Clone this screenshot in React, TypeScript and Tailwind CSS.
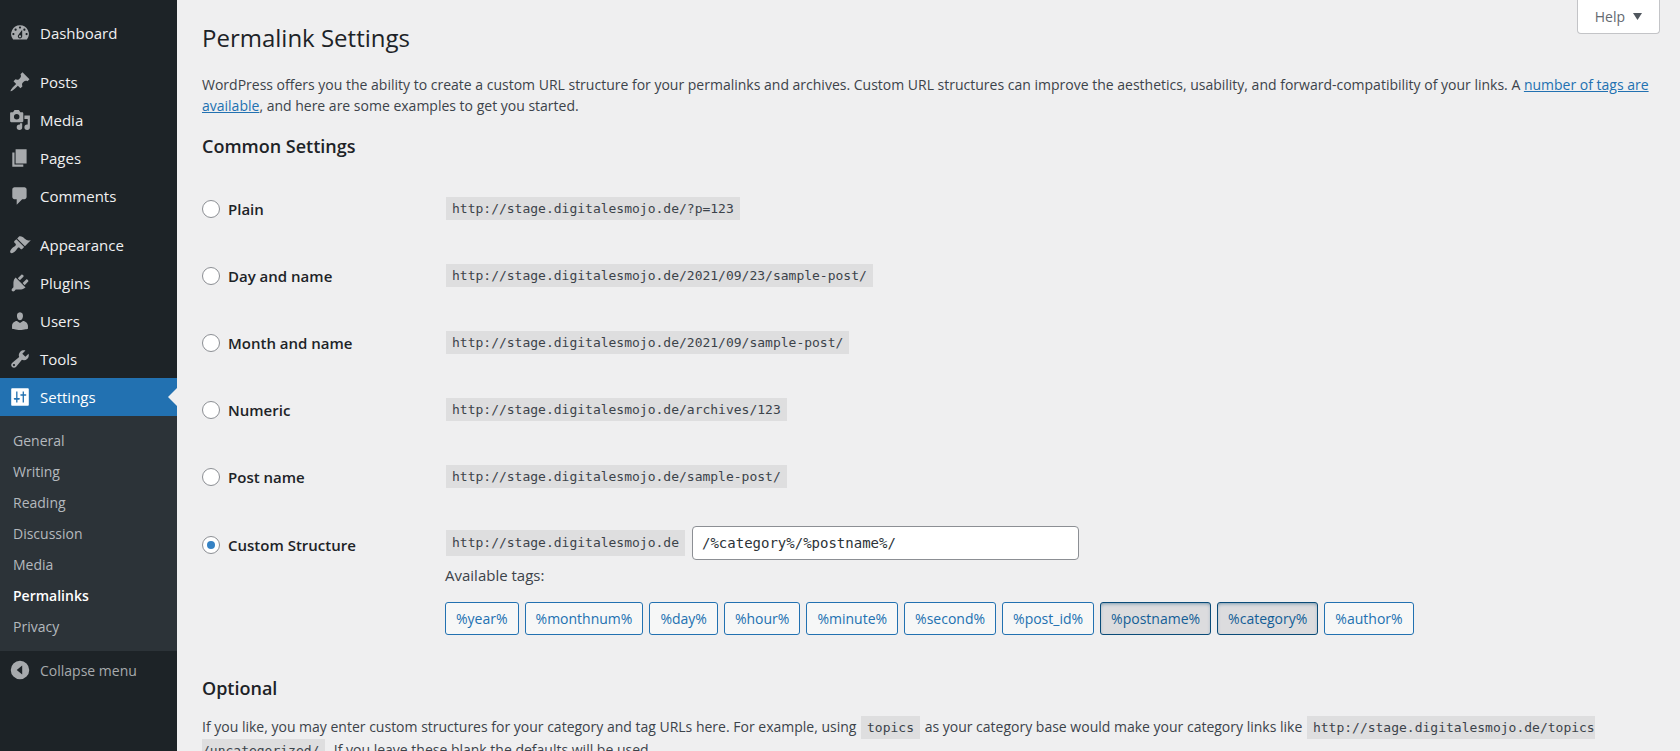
import { useState } from "react";
import type { ReactNode } from "react";

const ICONS = {
  dashboard:
    "M3.76 16h12.48A7.998 7.998 0 0 0 10 3a7.998 7.998 0 0 0-6.24 13zM10 4c.55 0 1 .45 1 1s-.45 1-1 1-1-.45-1-1 .45-1 1-1zM6 6c.55 0 1 .45 1 1s-.45 1-1 1-1-.45-1-1 .45-1 1-1zm8 0c.55 0 1 .45 1 1s-.45 1-1 1-1-.45-1-1 .45-1 1-1zm-5.37 5.55L12 7v6c0 1.1-.9 2-2 2s-2-.9-2-2c0-.57.24-1.08.63-1.45zM4 10c.55 0 1 .45 1 1s-.45 1-1 1-1-.45-1-1 .45-1 1-1zm12 0c.55 0 1 .45 1 1s-.45 1-1 1-1-.45-1-1 .45-1 1-1zm-5 3c0-.55-.45-1-1-1s-1 .45-1 1 .45 1 1 1 1-.45 1-1z",
  posts:
    "M10.44 3.02l1.82-1.82 6.36 6.35-1.83 1.82c-1.05-.68-2.48-.57-3.41.36l-.75.75c-.92.93-1.04 2.35-.35 3.41l-1.83 1.82-2.41-2.41-2.8 2.79c-.42.42-3.38 2.71-3.8 2.29s1.86-3.39 2.28-3.81l2.79-2.79L4.1 9.36l1.83-1.82c1.05.69 2.48.57 3.4-.36l.75-.75c.93-.92 1.05-2.35.36-3.41z",
  media:
    "M13 11V4c0-.55-.45-1-1-1h-1.67L9 1H5L3.67 3H2c-.55 0-1 .45-1 1v7c0 .55.45 1 1 1h10c.55 0 1-.45 1-1zM7 4.5a2.5 2.5 0 0 1 0 5 2.5 2.5 0 0 1 0-5zM14 6h5v10.5a2.5 2.5 0 1 1-5 0 2.5 2.5 0 0 1 2.5-2.5c.17 0 .34.02.5.05V9h-3V6zm-4 8.05V13h2v3.5a2.5 2.5 0 1 1-2.5-2.5c.17 0 .34.02.5.05z",
  pages: "M6 15V2h10v13H6zm-1 1h8v2H3V5h2v11z",
  comments:
    "M5 2h9c1.1 0 2 .9 2 2v7c0 1.1-.9 2-2 2h-2l-5 5v-5H5c-1.1 0-2-.9-2-2V4c0-1.1.9-2 2-2z",
  appearance:
    "M14.48 11.06L7.41 3.99l1.5-1.5c.5-.56 2.3-.47 3.51.32 1.21.8 1.43 1.28 2.91 2.1 1.18.64 2.45 1.26 4.45.85zm-.71.71L6.7 4.7 4.93 6.47c-.39.39-.39 1.02 0 1.41l1.06 1.06c.39.39.39 1.03 0 1.42-.6.6-1.43 1.11-2.21 1.69-.35.26-.7.53-1.01.84C1.43 14.23.4 16.08 1.4 17.07c.99 1 2.84-.03 4.18-1.36.31-.31.58-.66.85-1.02.57-.78 1.08-1.61 1.69-2.21.39-.39 1.02-.39 1.41 0l1.06 1.06c.39.39 1.02.39 1.41 0z",
  plugins:
    "M13.11 4.36L9.87 7.6 8 5.73l3.24-3.24c.35-.34 1.05-.2 1.56.32.52.51.66 1.21.31 1.55zm-8 1.77l.91-1.12 9.01 9.01-1.19.84c-.71.71-2.63 1.16-3.82 1.16H6.14L4.9 17.26c-.59.59-1.54.59-2.12 0a1.49 1.49 0 0 1 0-2.12l1.24-1.24v-3.88c0-1.13.4-3.19 1.09-3.89zm7.26 3.97l3.24-3.24c.34-.35 1.04-.21 1.55.31.52.51.66 1.21.31 1.55l-3.24 3.25z",
  users:
    "M10 9.25c-2.27 0-2.73-3.44-2.73-3.44C7 4.02 7.82 2 9.97 2c2.16 0 2.98 2.02 2.71 3.81 0 0-.41 3.44-2.68 3.44zm0 2.57L12.72 10c2.39 0 4.52 2.33 4.52 4.53v2.49s-3.65 1.13-7.24 1.13c-3.65 0-7.24-1.13-7.24-1.13v-2.49c0-2.25 1.94-4.48 4.47-4.48z",
  tools:
    "M16.68 9.77a4.543 4.543 0 0 1-4.95.99l-5.41 6.52c-.99.99-2.59.99-3.58 0s-.99-2.59 0-3.57l6.52-5.42c-.68-1.65-.35-3.61.99-4.95 1.28-1.28 3.12-1.62 4.72-1.06l-2.89 2.89 2.82 2.82 2.86-2.87c.53 1.58.18 3.39-1.08 4.65zM3.81 16.21c.4.39 1.04.39 1.43 0 .4-.4.4-1.04 0-1.43-.39-.4-1.03-.4-1.43 0a1.02 1.02 0 0 0 0 1.43z",
  settings:
    "M3 2h14c.55 0 1 .45 1 1v14c0 .55-.45 1-1 1H3c-.55 0-1-.45-1-1V3c0-.55.45-1 1-1zM6.5 5v6H5c-.4 0-.7.3-.7.7s.3.7.7.7h1.5V15h1.2v-2.6h1.5c.4 0 .7-.3.7-.7s-.3-.7-.7-.7H7.7V5zM12.4 5v2.4h-1.5c-.4 0-.7.3-.7.7s.3.7.7.7h1.5V15h1.2V8.8h1.5c.4 0 .7-.3.7-.7s-.3-.7-.7-.7h-1.5V5z",
  collapse:
    "M10 1.600a8.400 8.400 0 1 1 0 16.800 8.400 8.400 0 0 1 0-16.800zM12 14V6l-5 4z",
};

type IconName = keyof typeof ICONS;

function Icon({ name }: { name: IconName }) {
  return (
    <span className="flex w-10 shrink-0 justify-center">
      <svg viewBox="0 0 20 20" className="size-[22px] fill-current" aria-hidden="true">
        <path fillRule="evenodd" d={ICONS[name]} />
      </svg>
    </span>
  );
}

function MenuItem({ icon, label }: { icon: IconName; label: string }) {
  return (
    <li>
      <a href={`#${icon}`} className="flex h-[38px] items-center text-[#a7aaad]">
        <Icon name={icon} />
        <span className="pt-[2px] text-[15px] text-[#f0f0f1]">{label}</span>
      </a>
    </li>
  );
}

function Code({ children }: { children: ReactNode }) {
  return (
    <code className="mx-px bg-[#dededf] px-[6px] py-1 font-['DejaVu_Sans_Mono',monospace] text-[13px]">
      {children}
    </code>
  );
}

const SITE = "http://stage.digitalesmojo.de";

const STRUCTURES = [
  { id: "plain", label: "Plain", example: "/?p=123" },
  { id: "day", label: "Day and name", example: "/2021/09/23/sample-post/" },
  { id: "month", label: "Month and name", example: "/2021/09/sample-post/" },
  { id: "numeric", label: "Numeric", example: "/archives/123" },
  { id: "postname", label: "Post name", example: "/sample-post/" },
];

const TAGS = ["year", "monthnum", "day", "hour", "minute", "second", "post_id", "postname", "category", "author"];
const SUBMENU = ["General", "Writing", "Reading", "Discussion", "Media", "Permalinks", "Privacy"];

function Radio({
  id,
  label,
  selected,
  onSelect,
}: {
  id: string;
  label: string;
  selected: string;
  onSelect: (id: string) => void;
}) {
  return (
    <label className="inline-flex items-center gap-2 text-[15px] leading-5 font-semibold text-[#1d2327]">
      <input
        type="radio"
        name="structure"
        value={id}
        checked={selected === id}
        onChange={() => onSelect(id)}
        className="grid size-[18px] appearance-none place-content-center rounded-full border border-[#8c8f94] bg-white before:size-2 before:rounded-full checked:before:bg-[#3582c4]"
      />
      {label}
    </label>
  );
}

export default function App() {
  const [selected, setSelected] = useState("custom");
  const [structure, setStructure] = useState("/%category%/%postname%/");

  const toggleTag = (tag: string) => {
    const part = `%${tag}%/`;
    setStructure(structure.includes(part) ? structure.replace(part, "") : (structure || "/") + part);
  };

  return (
    <div className="flex h-screen overflow-hidden bg-[#efeff0] font-['Open_Sans','Noto_Sans',sans-serif] text-sm text-[#3c434a]">
      <nav aria-label="Main menu" className="w-[177px] shrink-0 bg-[#1d2327] pt-[14px]">
        <ul>
          <MenuItem icon="dashboard" label="Dashboard" />
        </ul>
        <ul className="mt-[11px]">
          <MenuItem icon="posts" label="Posts" />
          <MenuItem icon="media" label="Media" />
          <MenuItem icon="pages" label="Pages" />
          <MenuItem icon="comments" label="Comments" />
        </ul>
        <ul className="mt-[11px]">
          <MenuItem icon="appearance" label="Appearance" />
          <MenuItem icon="plugins" label="Plugins" />
          <MenuItem icon="users" label="Users" />
          <MenuItem icon="tools" label="Tools" />
          <li>
            <a href="#settings" className="flex h-[38px] items-center bg-[#2271b1] text-white">
              <Icon name="settings" />
              <span className="flex-1 pt-[2px] text-[15px]">Settings</span>
              <svg viewBox="0 0 9 18" className="h-[18px] w-[9px] fill-[#efeff0]" aria-hidden="true">
                <path d="M9 0v18L0 9z" />
              </svg>
            </a>
            <ul className="bg-[#2c3338] py-[9px]">
              {SUBMENU.map((item) => (
                <li key={item}>
                  <a
                    href={`#${item}`}
                    className={
                      item === "Permalinks"
                        ? "flex h-[31px] items-center px-[13px] font-semibold text-white"
                        : "flex h-[31px] items-center px-[13px] text-[#b4b9be]"
                    }
                  >
                    {item}
                  </a>
                </li>
              ))}
            </ul>
          </li>
        </ul>
        <button type="button" className="flex h-[38px] w-full items-center text-[#a7aaad]">
          <Icon name="collapse" />
          <span className="pt-[2px]">Collapse menu</span>
        </button>
      </nav>

      <main className="min-w-0 flex-1 pr-5 pl-[25px]">
        <div className="flex items-start justify-between">
          <h1 className="pt-[21px] text-2xl leading-[34px] text-[#1d2327]">Permalink Settings</h1>
          <button
            type="button"
            className="flex h-[34px] items-center gap-2 rounded-b border border-t-0 border-[#c3c4c7] bg-white px-[17px] text-[#646970]"
          >
            Help
            <svg viewBox="0 0 9 7" className="h-[7px] w-[9px] fill-[#50575e]" aria-hidden="true">
              <path d="M0 0h9L4.500 7z" />
            </svg>
          </button>
        </div>

        <p className="mt-[19px] leading-[21px]">
          WordPress offers you the ability to create a custom URL structure for your permalinks and archives. Custom
          URL structures can improve the aesthetics, usability, and forward-compatibility of your links. A{" "}
          <a href="#tags" className="text-[#2271b1] underline">
            number of tags are available
          </a>
          , and here are some examples to get you started.
        </p>

        <h2 className="mt-[18px] text-lg leading-6 font-semibold text-[#1d2327]">Common Settings</h2>

        <table className="mt-[17px] w-full border-collapse">
          <tbody>
            {STRUCTURES.map(({ id, label, example }) => (
              <tr key={id} className="h-[67px]">
                <th scope="row" className="w-[243px] text-left">
                  <Radio id={id} label={label} selected={selected} onSelect={setSelected} />
                </th>
                <td>
                  <Code>
                    {SITE}
                    {example}
                  </Code>
                </td>
              </tr>
            ))}
            <tr>
              <th scope="row" className="w-[243px] pt-6 text-left align-top">
                <Radio id="custom" label="Custom Structure" selected={selected} onSelect={setSelected} />
              </th>
              <td className="pt-4">
                <div className="flex items-center gap-[6px]">
                  <Code>{SITE}</Code>
                  <input
                    type="text"
                    aria-label="Custom structure"
                    value={structure}
                    onChange={(e) => setStructure(e.target.value)}
                    className="h-[34px] w-[387px] rounded border border-[#8c8f94] bg-white px-[9px] font-['DejaVu_Sans_Mono',monospace] text-sm text-[#2c3338]"
                  />
                </div>
                <p className="mt-1 text-[15px] leading-[22px]">Available tags:</p>
                <div className="mt-4 flex flex-wrap gap-[6px]">
                  {TAGS.map((tag) => (
                    <button
                      key={tag}
                      type="button"
                      aria-pressed={structure.includes(`%${tag}%`)}
                      onClick={() => toggleTag(tag)}
                      className="h-[33px] rounded-[3px] border border-[#2271b1] bg-[#f6f7f7] px-[10px] text-[#2271b1] aria-pressed:border-[#0a4b78] aria-pressed:bg-[#dcdcde] aria-pressed:text-[#135e96] aria-pressed:shadow-[inset_0_2px_5px_-3px_#0a4b78]"
                    >
                      %{tag}%
                    </button>
                  ))}
                </div>
              </td>
            </tr>
          </tbody>
        </table>

        <h2 className="mt-[41px] text-lg leading-6 font-semibold text-[#1d2327]">Optional</h2>
        <p className="mt-4 leading-[22px]">
          If you like, you may enter custom structures for your category and tag URLs here. For example, using{" "}
          <Code>topics</Code> as your category base would make your category links like{" "}
          <Code>
            {SITE}/topics
            <wbr />
            /uncategorized/
          </Code>
          . If you leave these blank the defaults will be used.
        </p>
      </main>
    </div>
  );
}
